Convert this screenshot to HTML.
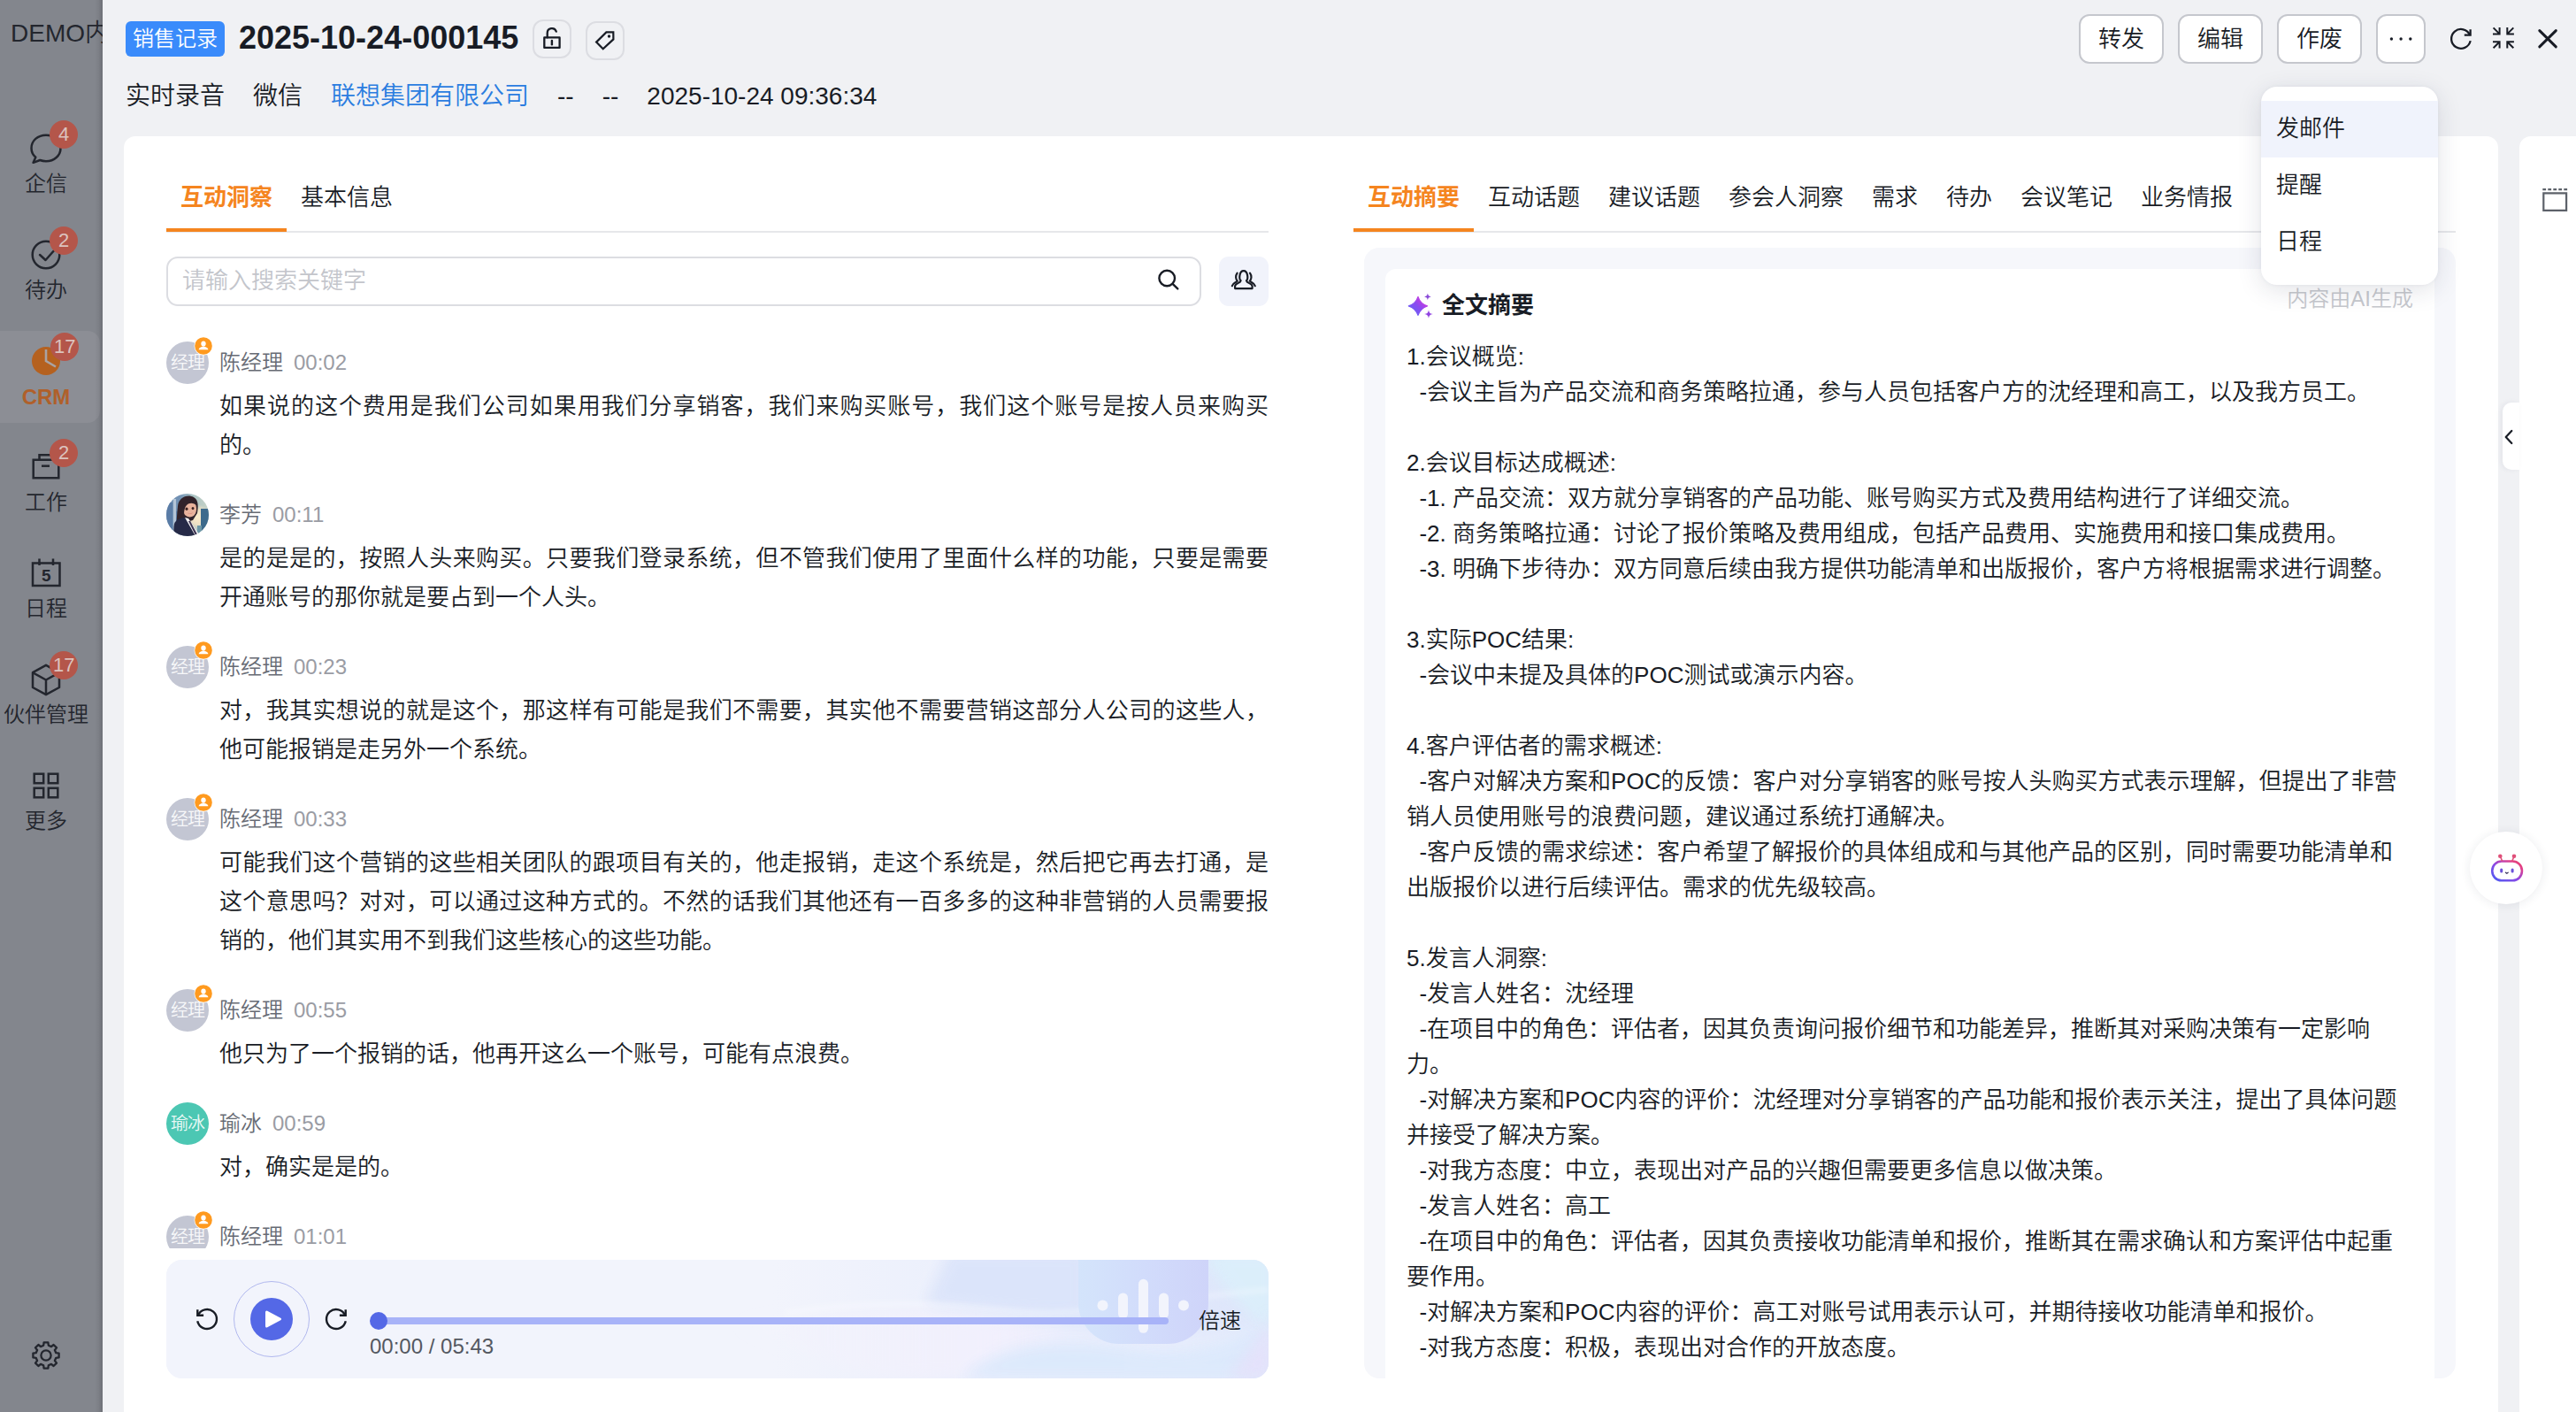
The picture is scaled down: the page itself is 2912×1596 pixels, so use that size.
<!DOCTYPE html>
<html lang="zh-CN">
<head>
<meta charset="utf-8">
<title>销售记录 2025-10-24-000145</title>
<style>
*{box-sizing:border-box;margin:0;padding:0}
html,body{width:2912px;height:1596px;overflow:hidden}
body{position:relative;background:#f0f1f4;color:#181c25;font-family:"Liberation Sans","Noto Sans CJK SC",sans-serif;font-size:26px;font-weight:350;-webkit-font-smoothing:antialiased}
.abs{position:absolute}
.t{position:absolute;white-space:nowrap;line-height:1}
svg{display:block;overflow:visible}
/* ---------- sidebar ---------- */
#side{position:absolute;left:0;top:0;width:116px;height:1596px;background:#83868d;overflow:hidden}
#side .shade{position:absolute;right:0;top:0;width:9px;height:100%;background:linear-gradient(to right,rgba(40,40,45,0),rgba(40,40,45,.07) 50%,rgba(40,40,45,.24))}
#side .demo{position:absolute;left:12px;top:18px;height:40px;line-height:40px;font-size:28px;color:#23262e;white-space:nowrap}
#side .cur{position:absolute;left:0;top:374px;width:113px;height:104px;background:#8c8e95;border-radius:0 14px 14px 0}
.si{position:absolute;left:0;width:104px;text-align:center;font-size:24px;line-height:32px;height:30px;color:#23262e;white-space:nowrap}
.si.on{color:#b0602a;font-weight:bold}
.bdg{position:absolute;height:32px;min-width:32px;border-radius:16px;background:#b4564a;color:#dcc3be;font-size:22px;line-height:32px;text-align:center;padding:0 6px;white-space:nowrap}
.ic{position:absolute}
/* ---------- header ---------- */
.tag{position:absolute;left:142px;top:24px;width:112px;height:40px;border-radius:6px;background:#3a8bfb;color:#fff;font-size:24px;line-height:40px;text-align:center;white-space:nowrap;overflow:hidden}
.ttl{position:absolute;left:270px;top:18px;height:50px;line-height:50px;font-size:36px;font-weight:bold;white-space:nowrap;color:#181c25}
.ibtn{position:absolute;width:44px;height:44px;border:2px solid #dcdde2;border-radius:12px}
.row2{position:absolute;left:142px;top:89px;height:40px;line-height:40px;font-size:28px;white-space:nowrap;color:#181c25}
.row2 span{display:inline-block;margin-right:32px;height:40px;vertical-align:top}
.row2 .lk{color:#2b7de0}
.btn{position:absolute;top:16px;height:56px;width:96px;border:2px solid #c5c7cd;border-radius:12px;background:#fff;font-size:26px;line-height:53px;text-align:center;white-space:nowrap;color:#181c25;overflow:hidden}
/* ---------- cards ---------- */
#card{position:absolute;left:140px;top:154px;width:2684px;height:1460px;background:#fff;border-radius:13px 13px 0 0}
#rcard{position:absolute;left:2848px;top:154px;width:80px;height:1460px;background:#fff;border-radius:13px 0 0 0}
.tabs{position:absolute;top:196px;height:67px;border-bottom:2px solid #e6e7ea;white-space:nowrap;font-size:0}
.tab{display:inline-block;position:relative;height:65px;padding:0 16px;font-size:26px;line-height:54px;color:#181c25;vertical-align:top}
.tab.on{color:#f5851f;font-weight:bold}
.tab.on:after{content:"";position:absolute;left:0;right:0;bottom:-1px;height:4px;background:#f5851f}
.search{position:absolute;left:188px;top:290px;width:1170px;height:56px;border:2px solid #dcdde2;border-radius:13px;background:#fff}
.search .ph{position:absolute;left:16px;top:0;height:52px;line-height:50px;font-size:26px;color:#c3c5cb;white-space:nowrap}
.pbtn{position:absolute;left:1378px;top:290px;width:56px;height:56px;border-radius:11px;background:#f1f3fb}
/* ---------- transcript ---------- */
#list{position:absolute;left:188px;top:376px;width:1252px;height:1035px;overflow:hidden}
#list .in{position:absolute;left:0;top:10px;width:1246px}
.msg{position:relative;height:auto;margin-bottom:34px}
.mh{position:relative;height:50px;white-space:nowrap;font-size:0}
.av{position:absolute;left:0;top:0;width:48px;height:48px;border-radius:50%}
.avt{color:rgba(255,255,255,.9);font-size:20px;line-height:48px;text-align:center;overflow:hidden;letter-spacing:-1px}
.ub{position:absolute;left:31px;top:-6px}
.nm{display:inline-block;vertical-align:top;margin-left:60px;margin-top:4px;height:40px;line-height:40px;font-size:24px;color:#676b74}
.tm{display:inline-block;vertical-align:top;margin-left:12px;margin-top:4px;height:40px;line-height:40px;font-size:24px;color:#9a9ca4}
.ml{margin-left:60px;width:1186px;height:44px;line-height:47px;font-weight:350;font-size:26px;color:#181c25;white-space:nowrap;overflow:visible}
.ml.j{text-align:justify;text-align-last:justify;white-space:normal}
/* ---------- player ---------- */
#player{position:absolute;left:188px;top:1424px;width:1246px;height:134px;border-radius:18px;background:#f2f4fc;overflow:hidden}
/* ---------- summary ---------- */
#sum{position:absolute;left:1542px;top:280px;width:1234px;height:1278px;border-radius:17px;background:#f6f7fb;overflow:hidden}
#sum .w{position:absolute;left:24px;top:24px;width:1186px;height:1300px;border-radius:12px 12px 0 0;background:#fff}
.sl{position:relative;height:40px;line-height:40px;font-size:26px;white-space:pre;color:#181c25}
#sumtxt{position:absolute;left:1590px;top:383px;width:1140px}
/* ---------- dropdown ---------- */
#dd{position:absolute;left:2556px;top:98px;width:200px;height:224px;border-radius:18px;background:#fff;box-shadow:0 6px 28px rgba(30,40,70,.13),0 0 4px rgba(30,40,70,.05);padding:16px 0}
#dd div{height:64px;line-height:62px;padding-left:17px;font-size:26px;color:#181c25;white-space:nowrap}
#dd div.h{background:#f0f3fc}
</style>
</head>
<body>
<div id="side">
<div class="demo">DEMO内</div>
<div class="cur"></div>
<!-- chat -->
<svg class="ic" style="left:34px;top:151px" width="36" height="35" viewBox="0 0 36 35" fill="none" stroke="#23262e" stroke-width="2.5" stroke-linejoin="round"><path d="M18 1.7C27.3 1.7 34.5 8 34.5 16.4C34.5 24.8 27.3 31.2 18 31.2C15.6 31.2 13.3 30.8 11.2 30L3.6 32.8L6.3 26.7C3.3 24.1 1.5 20.5 1.5 16.4C1.5 8 8.7 1.7 18 1.7Z"/></svg>
<div class="bdg" style="left:56px;top:136px">4</div>
<div class="si" style="top:192px">企信</div>
<!-- todo -->
<svg class="ic" style="left:34px;top:270px" width="36" height="36" viewBox="0 0 36 36" fill="none" stroke="#23262e" stroke-width="2.5" stroke-linecap="round" stroke-linejoin="round"><circle cx="18" cy="18" r="15.3"/><path d="M11 18L17.5 24L29 11"/></svg>
<div class="bdg" style="left:56px;top:256px">2</div>
<div class="si" style="top:312px">待办</div>
<!-- crm -->
<svg class="ic" style="left:36px;top:392px" width="32" height="32" viewBox="0 0 32 32"><circle cx="16" cy="16" r="16" fill="#b5611f"/><path d="M16 3V16L27 22.5" fill="none" stroke="#a9a3a3" stroke-width="2.6"/></svg>
<div class="bdg" style="left:57px;top:376px;padding:0 4px">17</div>
<div class="si on" style="top:433px">CRM</div>
<!-- work -->
<svg class="ic" style="left:35px;top:511px" width="34" height="32" viewBox="0 0 34 32" fill="none" stroke="#23262e" stroke-width="2.5" stroke-linejoin="miter"><path d="M2.7 8.7H31.3V29.2H2.7Z"/><path d="M9.5 8.5V3.2H24.5V8.5"/><path d="M12 15.7H21"/></svg>
<div class="bdg" style="left:56px;top:496px">2</div>
<div class="si" style="top:552px">工作</div>
<!-- calendar -->
<svg class="ic" style="left:34px;top:630px" width="36" height="35" viewBox="0 0 36 35" fill="none" stroke="#23262e" stroke-width="2.5"><path d="M3 6.5H33.5V32H3Z"/><path d="M10.5 1.5V9M26 1.5V9"/><text x="18.2" y="27" font-family="Liberation Sans,sans-serif" font-size="19" font-weight="bold" text-anchor="middle" fill="#23262e" stroke="none">5</text></svg>
<div class="si" style="top:672px">日程</div>
<!-- cube -->
<svg class="ic" style="left:35px;top:750px" width="34" height="37" viewBox="0 0 34 37" fill="none" stroke="#23262e" stroke-width="2.5" stroke-linejoin="round"><path d="M17 1.8L32 10.2V27L17 35.2L2 27V10.2Z"/><path d="M2.5 10.5L17 18.5L31.5 10.5M17 18.5V35"/></svg>
<div class="bdg" style="left:56px;top:736px;padding:0 4px">17</div>
<div class="si" style="top:792px">伙伴管理</div>
<!-- more -->
<svg class="ic" style="left:36px;top:872px" width="32" height="32" viewBox="0 0 32 32" fill="none" stroke="#23262e" stroke-width="2.5"><rect x="2.7" y="2.7" width="10.5" height="10.5"/><rect x="18.8" y="2.7" width="10.5" height="10.5"/><rect x="2.7" y="18.8" width="10.5" height="10.5"/><rect x="18.8" y="18.8" width="10.5" height="10.5"/></svg>
<div class="si" style="top:912px">更多</div>
<!-- settings -->
<svg class="ic" style="left:36px;top:1516px" width="32" height="32" viewBox="0 0 32 32" fill="none" stroke="#23262e" stroke-width="2.3" stroke-linejoin="round"><path d="M13.2 4.7 L13.6 1.4 L18.4 1.4 L18.8 4.7 L22 6.1 L24.6 4 L28 7.4 L25.9 10 L27.3 13.2 L30.6 13.6 L30.6 18.4 L27.3 18.8 L25.9 22 L28 24.6 L24.6 28 L22 25.9 L18.8 27.3 L18.4 30.6 L13.6 30.6 L13.2 27.3 L10 25.9 L7.4 28 L4 24.6 L6.1 22 L4.7 18.8 L1.4 18.4 L1.4 13.6 L4.7 13.2 L6.1 10 L4 7.4 L7.4 4 L10 6.1Z"/><circle cx="16" cy="16" r="5.6"/></svg>
<div class="shade"></div>
</div>
<div class="tag">销售记录</div>
<div class="ttl">2025-10-24-000145</div>
<div class="ibtn" style="left:602px;top:22px"></div>
<svg class="ic" style="left:602px;top:22px" width="44" height="44" viewBox="0 0 44 44" fill="none" stroke="#181c25" stroke-width="2.3"><path d="M13.3 20.4H30.6V31.9H13.3Z" stroke-linejoin="round"/><path d="M16.7 20.4V15.4A5.2 5.2 0 0 1 26.8 13.6" stroke-linecap="round"/><path d="M21.9 24V28.2" stroke-linecap="round" stroke-width="2.4"/></svg>
<div class="ibtn" style="left:662px;top:24px"></div>
<svg class="ic" style="left:662px;top:24px" width="44" height="44" viewBox="0 0 44 44" fill="none" stroke="#181c25" stroke-width="2.2" stroke-linejoin="miter"><path d="M23.4 12.4L31.3 12.3L31.4 20.4L19.7 31.2L12.1 23.6Z"/><circle cx="26.5" cy="17" r="1.7" fill="#181c25" stroke="none"/></svg>
<div class="row2"><span>实时录音</span><span>微信</span><span class="lk">联想集团有限公司</span><span>--</span><span>--</span><span>2025-10-24 09:36:34</span></div>
<div class="btn" style="left:2350px">转发</div>
<div class="btn" style="left:2462px">编辑</div>
<div class="btn" style="left:2574px">作废</div>
<div class="btn" style="left:2686px;width:56px"></div>
<svg class="ic" style="left:2686px;top:16px" width="56" height="56" viewBox="0 0 56 56" fill="#181c25"><circle cx="17.4" cy="28" r="1.7"/><circle cx="28.1" cy="28" r="1.7"/><circle cx="38.8" cy="28" r="1.7"/></svg>
<!-- refresh / collapse / close -->
<svg class="ic" style="left:2762px;top:24px" width="40" height="40" viewBox="2762 24 40 40" fill="none" stroke="#181c25" stroke-width="2.3"><path d="M2792.66 46.12A10.9 10.9 0 1 1 2792.1 39.77"/><path d="M2792.6 33.2V39.7H2785.8"/></svg>
<svg class="ic" style="left:2810px;top:24px" width="40" height="40" viewBox="2810 24 40 40" fill="none" stroke="#181c25" stroke-width="2"><path d="M2818 38.4H2825.6V31M2825.6 38.4L2818.6 31.4"/><path d="M2841.9 38.4H2834.3V31M2834.3 38.4L2841.3 31.4"/><path d="M2818 47.2H2825.6V54.5M2825.6 47.2L2818.6 54.2"/><path d="M2841.9 47.2H2834.3V54.5M2834.3 47.2L2841.3 54.2"/></svg>
<svg class="ic" style="left:2860px;top:24px" width="40" height="40" viewBox="2860 24 40 40" fill="none" stroke="#181c25" stroke-width="3" stroke-linecap="round"><path d="M2870.8 34.6L2889.3 52.9M2889.3 34.6L2870.8 52.9"/></svg>

<div id="card"></div>
<div id="rcard"></div>
<!-- left tabs -->
<div class="tabs" style="left:188px;width:1246px"><span class="tab on">互动洞察</span><span class="tab">基本信息</span></div>
<div class="search"><div class="ph">请输入搜索关键字</div></div>
<svg class="ic" style="left:1300px;top:296px" width="44" height="44" viewBox="1300 296 44 44" fill="none" stroke="#181c25" stroke-width="2.4" stroke-linecap="round"><circle cx="1319.2" cy="314.5" r="8.8"/><path d="M1325.6 320.9L1331.3 326.4"/></svg>
<div class="pbtn"></div>
<svg class="ic" style="left:1378px;top:290px" width="56" height="56" viewBox="1378 290 56 56" fill="none" stroke="#181c25" stroke-width="2.2" stroke-linejoin="round" stroke-linecap="round"><path d="M1402.6 317.2C1400.4 315.4 1400.8 306.2 1405.8 306.2C1410.8 306.2 1411.2 315.4 1409 317.2C1409.6 320.2 1415.6 320.2 1415.6 323.6V326.1H1396.1V323.6C1396.1 320.2 1402 320.2 1402.6 317.2Z"/><path d="M1398.6 308.6C1396.4 311.6 1396.8 315.8 1398.8 317.6C1397.4 319.4 1393.6 319.8 1392.8 323.2"/><path d="M1413 308.6C1415.2 311.6 1414.8 315.8 1412.8 317.6C1414.2 319.4 1418 319.8 1418.8 323.2"/></svg>
<!-- transcript -->
<div id="list"><div class="in">
<div class="msg"><div class="mh"><div class="av avt" style="background:#c3c6d3">经理</div><svg class="ub" width="22" height="22" viewBox="0 0 22 22"><circle cx="11" cy="11" r="10.5" fill="#fff"/><circle cx="11" cy="11" r="9.8" fill="#ff9a1f"/><ellipse cx="11" cy="8.6" rx="2.7" ry="3.1" fill="#fff"/><path d="M5.6 15.2c.3-2 2.4-2.7 3.9-3.1h3c1.5.4 3.6 1.1 3.9 3.1z" fill="#fff"/></svg><span class="nm">陈经理</span><span class="tm">00:02</span></div><div class="ml j">如果说的这个费用是我们公司如果用我们分享销客，我们来购买账号，我们这个账号是按人员来购买</div><div class="ml">的。</div></div>
<div class="msg"><div class="mh"><svg class="av" width="48" height="48" viewBox="0 0 48 48"><defs><clipPath id="avc"><circle cx="24" cy="24" r="24"/></clipPath><linearGradient id="avbg" x1="0" y1="0" x2="1" y2="0"><stop offset="0" stop-color="#7d9ab8"/><stop offset=".3" stop-color="#6f8fb3"/><stop offset=".62" stop-color="#a9c3c4"/><stop offset="1" stop-color="#c9d4c8"/></linearGradient><radialGradient id="avglow" cx=".74" cy=".55" r=".3"><stop offset="0" stop-color="#fdeccb"/><stop offset=".6" stop-color="#f6e3c4" stop-opacity=".85"/><stop offset="1" stop-color="#f6e3c4" stop-opacity="0"/></radialGradient><filter id="avb" x="-10%" y="-10%" width="120%" height="120%"><feGaussianBlur stdDeviation=".7"/></filter></defs><g clip-path="url(#avc)"><rect width="48" height="48" fill="url(#avbg)"/><g filter="url(#avb)"><rect x="-2" y="10" width="9" height="40" fill="#5a7ba6"/><rect x="8" y="6" width="3" height="44" fill="#b3c4d6"/><rect x="11" y="20" width="6" height="30" fill="#5d7fa8"/><rect width="48" height="48" fill="url(#avglow)"/><rect x="39" y="17" width="10" height="33" fill="#3e6a8c"/><rect x="35" y="36" width="5" height="14" fill="#6e98a8"/><path d="M13 14C14 4 24 0 31 4C37 7 36 16 35 22L30 30L20 33C17 36 14 38 11 36C12 30 12 22 13 14Z" fill="#30242a"/><path d="M19 13C22 8 30 7 33 12C35 17 34 22 31 25C28 27 24 27 21 24C19 21 18 17 19 13Z" fill="#e9b29c"/><path d="M18 15C18 9 24 5 30 7C33 8 35 11 35 14C31 10 26 10 23 13C21 15 20 19 20 23C18 21 18 18 18 15Z" fill="#30242a"/><ellipse cx="23" cy="17.3" rx="1.5" ry="1.7" fill="#3a2220"/><ellipse cx="30" cy="16.6" rx="1.4" ry="1.6" fill="#3a2220"/><path d="M24 21.5C26 22.8 28 22.6 30 21.3C29 23.5 25.5 23.8 24 21.5Z" fill="#d98a7c"/><path d="M9 34C11 29 17 27 21 27L27 31L38 52H10C8 46 8 39 9 34Z" fill="#262a46"/><path d="M21 27L25 28L37 46L33 48Z" fill="#f4f2f3"/><path d="M25 31L27 31L35 46L33 47Z" fill="#3a3050"/></g></g></svg><span class="nm">李芳</span><span class="tm">00:11</span></div><div class="ml j">是的是是的，按照人头来购买。只要我们登录系统，但不管我们使用了里面什么样的功能，只要是需要</div><div class="ml">开通账号的那你就是要占到一个人头。</div></div>
<div class="msg"><div class="mh"><div class="av avt" style="background:#c3c6d3">经理</div><svg class="ub" width="22" height="22" viewBox="0 0 22 22"><circle cx="11" cy="11" r="10.5" fill="#fff"/><circle cx="11" cy="11" r="9.8" fill="#ff9a1f"/><ellipse cx="11" cy="8.6" rx="2.7" ry="3.1" fill="#fff"/><path d="M5.6 15.2c.3-2 2.4-2.7 3.9-3.1h3c1.5.4 3.6 1.1 3.9 3.1z" fill="#fff"/></svg><span class="nm">陈经理</span><span class="tm">00:23</span></div><div class="ml j">对，我其实想说的就是这个，那这样有可能是我们不需要，其实他不需要营销这部分人公司的这些人，</div><div class="ml">他可能报销是走另外一个系统。</div></div>
<div class="msg"><div class="mh"><div class="av avt" style="background:#c3c6d3">经理</div><svg class="ub" width="22" height="22" viewBox="0 0 22 22"><circle cx="11" cy="11" r="10.5" fill="#fff"/><circle cx="11" cy="11" r="9.8" fill="#ff9a1f"/><ellipse cx="11" cy="8.6" rx="2.7" ry="3.1" fill="#fff"/><path d="M5.6 15.2c.3-2 2.4-2.7 3.9-3.1h3c1.5.4 3.6 1.1 3.9 3.1z" fill="#fff"/></svg><span class="nm">陈经理</span><span class="tm">00:33</span></div><div class="ml j">可能我们这个营销的这些相关团队的跟项目有关的，他走报销，走这个系统是，然后把它再去打通，是</div><div class="ml j">这个意思吗？对对，可以通过这种方式的。不然的话我们其他还有一百多多的这种非营销的人员需要报</div><div class="ml">销的，他们其实用不到我们这些核心的这些功能。</div></div>
<div class="msg"><div class="mh"><div class="av avt" style="background:#c3c6d3">经理</div><svg class="ub" width="22" height="22" viewBox="0 0 22 22"><circle cx="11" cy="11" r="10.5" fill="#fff"/><circle cx="11" cy="11" r="9.8" fill="#ff9a1f"/><ellipse cx="11" cy="8.6" rx="2.7" ry="3.1" fill="#fff"/><path d="M5.6 15.2c.3-2 2.4-2.7 3.9-3.1h3c1.5.4 3.6 1.1 3.9 3.1z" fill="#fff"/></svg><span class="nm">陈经理</span><span class="tm">00:55</span></div><div class="ml">他只为了一个报销的话，他再开这么一个账号，可能有点浪费。</div></div>
<div class="msg"><div class="mh"><div class="av avt" style="background:#4cc7b3">瑜冰</div><span class="nm">瑜冰</span><span class="tm">00:59</span></div><div class="ml">对，确实是是的。</div></div>
<div class="msg"><div class="mh"><div class="av avt" style="background:#c3c6d3">经理</div><svg class="ub" width="22" height="22" viewBox="0 0 22 22"><circle cx="11" cy="11" r="10.5" fill="#fff"/><circle cx="11" cy="11" r="9.8" fill="#ff9a1f"/><ellipse cx="11" cy="8.6" rx="2.7" ry="3.1" fill="#fff"/><path d="M5.6 15.2c.3-2 2.4-2.7 3.9-3.1h3c1.5.4 3.6 1.1 3.9 3.1z" fill="#fff"/></svg><span class="nm">陈经理</span><span class="tm">01:01</span></div></div>
</div></div>
<!-- player -->
<div id="player">
<svg class="ic" style="left:0;top:0" width="1246" height="134" viewBox="0 0 1246 134"><defs>
<linearGradient id="pbg" x1="0" y1="0" x2="1" y2="0"><stop offset="0" stop-color="#f2f4fc"/><stop offset=".55" stop-color="#f2f4fc"/><stop offset=".7" stop-color="#ecf0fc"/><stop offset=".82" stop-color="#e0e9fb"/><stop offset="1" stop-color="#dfe6fb"/></linearGradient>
<linearGradient id="mic" x1="0" y1="0" x2="1" y2="0"><stop offset="0" stop-color="#d3e4fb"/><stop offset=".55" stop-color="#d0dafb"/><stop offset="1" stop-color="#cdd2f9"/></linearGradient>
<linearGradient id="wv1" x1="0" y1="0" x2="1" y2="0"><stop offset="0" stop-color="#f6f2fc" stop-opacity="0"/><stop offset=".5" stop-color="#f3f0fd" stop-opacity=".9"/><stop offset="1" stop-color="#e9f0fd" stop-opacity=".6"/></linearGradient>
<filter id="bl8" x="-20%" y="-50%" width="140%" height="200%"><feGaussianBlur stdDeviation="8"/></filter>
<filter id="bl3" x="-20%" y="-50%" width="140%" height="200%"><feGaussianBlur stdDeviation="3"/></filter>
</defs>
<rect width="1246" height="134" fill="url(#pbg)"/>
<path d="M886 -10L1040 -10V62C980 66 920 58 858 50Z" fill="#dbe4fa" opacity=".95" filter="url(#bl8)"/>
<path d="M640 74C760 52 840 56 900 62C1000 72 1100 100 1246 70V134H800C740 112 700 92 640 74Z" fill="url(#wv1)" filter="url(#bl8)"/>
<path d="M900 134C940 96 1010 84 1090 100C1140 110 1200 100 1246 70V134Z" fill="#dce9fc" opacity=".95" filter="url(#bl8)"/>
<path d="M1170 -10H1256V90C1220 60 1190 30 1170 -10Z" fill="#daf0fb" opacity=".8" filter="url(#bl8)"/>
<path d="M1200 134C1220 110 1236 90 1250 60V134Z" fill="#e6e0fa" opacity=".8" filter="url(#bl8)"/>
<path d="M700 60C800 44 880 50 960 58C1040 66 1120 44 1246 34" fill="none" stroke="#fff" stroke-opacity=".55" stroke-width="3" filter="url(#bl3)"/>
<rect x="1031" y="-50" width="147" height="145" rx="46" fill="url(#mic)" opacity=".92"/>
<g fill="#f4f6fd" opacity=".95"><circle cx="1058.5" cy="51.6" r="6"/><rect x="1076" y="37.5" width="11" height="29" rx="5.5"/><rect x="1099" y="21.8" width="11" height="61" rx="5.5"/><rect x="1122" y="37.5" width="11" height="29" rx="5.5"/><circle cx="1150" cy="51.6" r="6"/></g>
</svg>
</div>
<!-- player controls -->
<svg class="ic" style="left:214px;top:1471px" width="40" height="40" viewBox="-20 -20 40 40" fill="none" stroke="#181c25" stroke-width="2.4"><g transform="scale(-1,1)"><path d="M10.76 2.28A11 11 0 1 1 10.2 -4.12"/><path d="M10.7 -10.8V-4.2H3.9"/></g></svg>
<div class="abs" style="left:264px;top:1448px;width:86px;height:86px;border-radius:50%;border:1.5px solid #b1b8ee"></div>
<div class="abs" style="left:283px;top:1467px;width:48px;height:48px;border-radius:50%;background:#5468e6"></div>
<svg class="ic" style="left:283px;top:1467px" width="48" height="48" viewBox="283 1467 48 48"><path d="M301.5 1483L316.5 1491L301.5 1499Z" fill="#fff" stroke="#fff" stroke-width="3" stroke-linejoin="round"/></svg>
<svg class="ic" style="left:360px;top:1471px" width="40" height="40" viewBox="-20 -20 40 40" fill="none" stroke="#181c25" stroke-width="2.4"><path d="M10.76 2.28A11 11 0 1 1 10.2 -4.12"/><path d="M10.7 -10.8V-4.2H3.9"/></svg>
<div class="abs" style="left:428px;top:1489px;width:893px;height:8px;border-radius:0 4px 4px 0;background:#a8b3f8"></div>
<div class="abs" style="left:418px;top:1483px;width:20px;height:20px;border-radius:50%;background:#5468e6"></div>
<div class="t" style="left:418px;top:1502px;height:40px;line-height:40px;font-size:24px;color:#545861">00:00 / 05:43</div>
<div class="t" style="left:1355px;top:1473px;height:40px;line-height:40px;font-size:24px;color:#181c25">倍速</div>
<!-- right tabs -->
<div class="tabs" style="left:1530px;width:1246px"><span class="tab on">互动摘要</span><span class="tab">互动话题</span><span class="tab">建议话题</span><span class="tab">参会人洞察</span><span class="tab">需求</span><span class="tab">待办</span><span class="tab">会议笔记</span><span class="tab">业务情报</span></div>
<!-- summary -->
<div id="sum"><div class="w"></div></div>
<svg class="ic" style="left:1590px;top:330px" width="32" height="32" viewBox="1590 330 32 32"><defs><linearGradient id="spk" x1="0" y1="1" x2="1" y2="0"><stop offset="0" stop-color="#5a66f7"/><stop offset=".5" stop-color="#8a4cf0"/><stop offset="1" stop-color="#ee2fd8"/></linearGradient></defs><path d="M1603 335.4Q1605.6 343.3 1613.5 345.9Q1605.6 348.5 1603 356.4Q1600.4 348.5 1592.3 345.9Q1600.4 343.3 1603 335.4Z" fill="url(#spk)" stroke="url(#spk)" stroke-width="1.2" stroke-linejoin="round"/><path d="M1613.9 331.6C1614.4 334.2 1615.1 334.9 1617.7 335.4C1615.1 335.9 1614.4 336.6 1613.9 339.2C1613.4 336.6 1612.7 335.9 1610.1 335.4C1612.7 334.9 1613.4 334.2 1613.9 331.6Z" fill="#8a4bd8"/><path d="M1615 350.2C1615.6 353.5 1616.5 354.4 1619.8 355C1616.5 355.6 1615.6 356.5 1615 359.8C1614.4 356.5 1613.5 355.6 1610.2 355C1613.5 354.4 1614.4 353.5 1615 350.2Z" fill="#9144e2"/></svg>
<div class="t" style="left:1630px;top:325px;height:40px;line-height:40px;font-size:26px;font-weight:bold;color:#181c25">全文摘要</div>
<div class="t" style="right:184px;top:318px;height:40px;line-height:40px;font-size:24px;color:#c6c8cd">内容由AI生成</div>
<div id="sumtxt">
<div class="sl">1.会议概览:</div>
<div class="sl">  -会议主旨为产品交流和商务策略拉通，参与人员包括客户方的沈经理和高工，以及我方员工。</div>
<div class="sl">&nbsp;</div>
<div class="sl">2.会议目标达成概述:</div>
<div class="sl">  -1. 产品交流：双方就分享销客的产品功能、账号购买方式及费用结构进行了详细交流。</div>
<div class="sl">  -2. 商务策略拉通：讨论了报价策略及费用组成，包括产品费用、实施费用和接口集成费用。</div>
<div class="sl">  -3. 明确下步待办：双方同意后续由我方提供功能清单和出版报价，客户方将根据需求进行调整。</div>
<div class="sl">&nbsp;</div>
<div class="sl">3.实际POC结果:</div>
<div class="sl">  -会议中未提及具体的POC测试或演示内容。</div>
<div class="sl">&nbsp;</div>
<div class="sl">4.客户评估者的需求概述:</div>
<div class="sl">  -客户对解决方案和POC的反馈：客户对分享销客的账号按人头购买方式表示理解，但提出了非营</div>
<div class="sl">销人员使用账号的浪费问题，建议通过系统打通解决。</div>
<div class="sl">  -客户反馈的需求综述：客户希望了解报价的具体组成和与其他产品的区别，同时需要功能清单和</div>
<div class="sl">出版报价以进行后续评估。需求的优先级较高。</div>
<div class="sl">&nbsp;</div>
<div class="sl">5.发言人洞察:</div>
<div class="sl">  -发言人姓名：沈经理</div>
<div class="sl">  -在项目中的角色：评估者，因其负责询问报价细节和功能差异，推断其对采购决策有一定影响</div>
<div class="sl">力。</div>
<div class="sl">  -对解决方案和POC内容的评价：沈经理对分享销客的产品功能和报价表示关注，提出了具体问题</div>
<div class="sl">并接受了解决方案。</div>
<div class="sl">  -对我方态度：中立，表现出对产品的兴趣但需要更多信息以做决策。</div>
<div class="sl">  -发言人姓名：高工</div>
<div class="sl">  -在项目中的角色：评估者，因其负责接收功能清单和报价，推断其在需求确认和方案评估中起重</div>
<div class="sl">要作用。</div>
<div class="sl">  -对解决方案和POC内容的评价：高工对账号试用表示认可，并期待接收功能清单和报价。</div>
<div class="sl">  -对我方态度：积极，表现出对合作的开放态度。</div>
</div>
<!-- right-edge widgets -->
<svg class="ic" style="left:2870px;top:208px" width="36" height="36" viewBox="2870 208 36 36" fill="none" stroke="#5c6169" stroke-width="2.2"><path d="M2874.3 214.2H2902.2" stroke-dasharray="3.8 2.2"/><path d="M2875.3 218.3H2901.1V237.8H2875.3Z"/></svg>
<div class="abs" style="left:2829px;top:455px;width:19px;height:76px;background:#fff;border-radius:10px 0 0 10px;box-shadow:-2px 0 6px rgba(30,40,70,.06)"></div>
<svg class="ic" style="left:2826px;top:482px" width="24" height="24" viewBox="2826 482 24 24" fill="none" stroke="#181c25" stroke-width="2.2" stroke-linecap="round" stroke-linejoin="round"><path d="M2839.3 487L2832.7 494L2839.3 501"/></svg>
<div class="abs" style="left:2792px;top:940px;width:82px;height:82px;border-radius:50%;background:#fff;box-shadow:0 1px 12px rgba(30,40,70,.09)"></div>
<svg class="ic" style="left:2808px;top:960px" width="52" height="44" viewBox="2808 960 52 44" fill="none"><defs><linearGradient id="rb" x1="0" y1="1" x2="1" y2="0"><stop offset="0" stop-color="#4b5cf2"/><stop offset=".45" stop-color="#8a4ae6"/><stop offset=".8" stop-color="#e0408c"/><stop offset="1" stop-color="#e8456e"/></linearGradient></defs><rect x="2817.3" y="973.5" width="33.6" height="21.8" rx="10.5" stroke="url(#rb)" stroke-width="2.6"/><path d="M2826.6 968.5L2828.6 973.3M2841.8 968.5L2839.8 973.3" stroke="#e0507a" stroke-width="1.6"/><circle cx="2826.3" cy="967.8" r="2.3" fill="#e0507a"/><circle cx="2842" cy="967.8" r="2.3" fill="#e0507a"/><rect x="2826.2" y="981.5" width="3" height="5" rx="1.5" fill="#6a50d8"/><rect x="2838.6" y="981.5" width="3" height="5" rx="1.5" fill="#6a50d8"/><path d="M2832.4 986.2L2833.8 987.3L2835.2 986.2" stroke="#3a3560" stroke-width="1.2" stroke-linecap="round" stroke-linejoin="round"/></svg>
<!-- dropdown -->
<div id="dd"><div class="h">发邮件</div><div>提醒</div><div>日程</div></div>

</body>
</html>
